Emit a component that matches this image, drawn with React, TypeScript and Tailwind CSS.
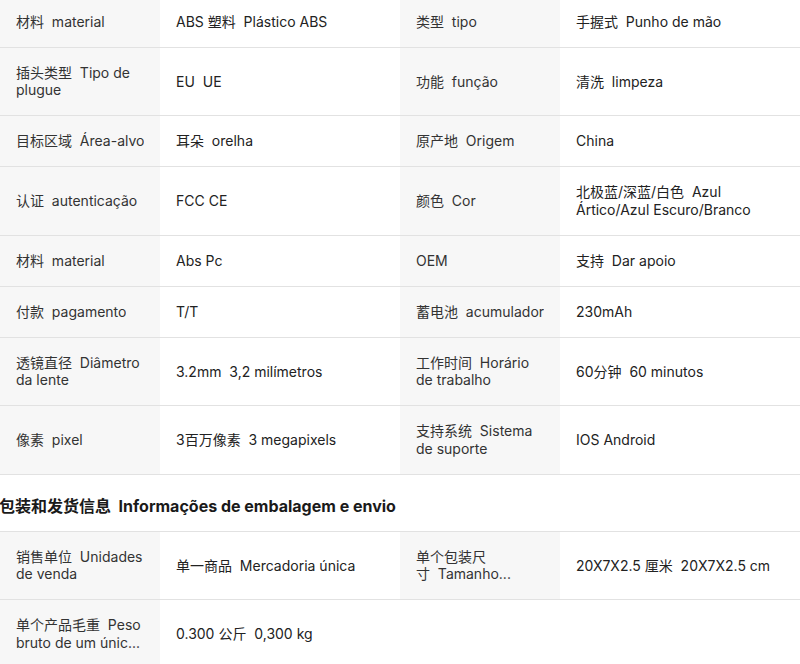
const font = { fontFamily: 'Inter, "Noto Sans CJK SC", sans-serif' };

type Pair = [string, string];
type Row = Pair[];

const specs: Row[] = [
    [["材料\u00a0\u00a0material", "ABS 塑料\u00a0\u00a0Plástico ABS"], ["类型\u00a0\u00a0tipo", "手握式\u00a0\u00a0Punho de mão"]],
    [["插头类型\u00a0\u00a0Tipo de plugue", "EU\u00a0\u00a0UE"], ["功能\u00a0\u00a0função", "清洗\u00a0\u00a0limpeza"]],
    [["目标区域\u00a0\u00a0Área-alvo", "耳朵\u00a0\u00a0orelha"], ["原产地\u00a0\u00a0Origem", "China"]],
    [["认证\u00a0\u00a0autenticação", "FCC CE"], ["颜色\u00a0\u00a0Cor", "北极蓝/深蓝/白色\u00a0\u00a0Azul Ártico/Azul Escuro/Branco"]],
    [["材料\u00a0\u00a0material", "Abs Pc"], ["OEM", "支持\u00a0\u00a0Dar apoio"]],
    [["付款\u00a0\u00a0pagamento", "T/T"], ["蓄电池\u00a0\u00a0acumulador", "230mAh"]],
    [["透镜直径\u00a0\u00a0Diâmetro da lente", "3.2mm\u00a0\u00a03,2 milímetros"], ["工作时间\u00a0\u00a0Horário de trabalho", "60分钟\u00a0\u00a060 minutos"]],
    [["像素\u00a0\u00a0pixel", "3百万像素\u00a0\u00a03 megapixels"], ["支持系统\u00a0\u00a0Sistema de suporte", "IOS Android"]],
];

const packing: Row[] = [
    [["销售单位\u00a0\u00a0Unidades de venda", "单一商品\u00a0\u00a0Mercadoria única"], ["单个包装尺寸\u00a0\u00a0Tamanho...", "20X7X2.5 厘米\u00a0\u00a020X7X2.5 cm"]],
    [["单个产品毛重\u00a0\u00a0Peso bruto de um únic...", "0.300 公斤\u00a0\u00a00,300 kg"]],
];

function Cells({ label, value }: { label: string; value: string }) {
    return (
        <>
            <div className="flex items-center bg-[#f7f7f7] pl-4 pr-3 py-[16.25px] text-[#333] leading-[17.5px]">
                <span className="line-clamp-2">{label}</span>
            </div>
            <div className="flex items-center px-4 py-[16.25px] text-[#222] leading-[17.5px]">
                <span>{value}</span>
            </div>
        </>
    );
}

function Table({ rows }: { rows: Row[] }) {
    return (
        <div>
            {rows.map((row, i) => (
                <div key={i} className="grid grid-cols-[160px_240px_160px_240px] border-b border-[#e2e2e2]">
                    {row.map(([l, v], j) => (
                        <Cells key={j} label={l} value={v} />
                    ))}
                </div>
            ))}
        </div>
    );
}

export default function App() {
    return (
        <div style={font} className="w-[800px] h-[664px] overflow-hidden bg-white text-sm">
            <div className="-mt-[3.5px]">
                <Table rows={specs} />
                <div className="flex h-[57px] items-center pt-[7px] border-b border-[#e2e2e2] -ml-[1px]">
                    <h3 className="text-base font-bold text-[#1a1a1a] leading-5">
                        包装和发货信息{"\u00a0\u00a0"}Informações de embalagem e envio
                    </h3>
                </div>
                <Table rows={packing} />
            </div>
        </div>
    );
}
